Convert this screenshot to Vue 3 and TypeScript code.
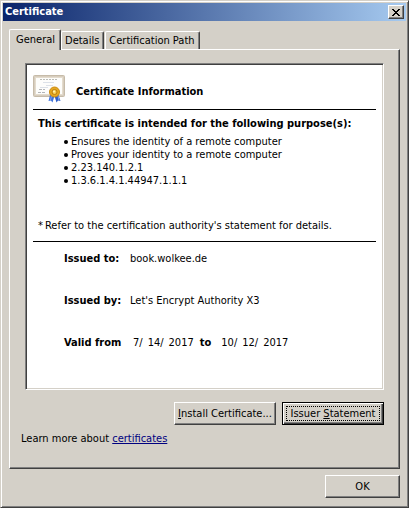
<script setup lang="ts">
import { ref } from 'vue'

const tabs: string[] = ['General', 'Details', 'Certification Path']
const activeTab = ref<string>('General')

const purposes: string[] = [
  'Ensures the identity of a remote computer',
  'Proves your identity to a remote computer',
  '2.23.140.1.2.1',
  '1.3.6.1.4.1.44947.1.1.1',
]

const certificate = {
  issuedTo: 'book.wolkee.de',
  issuedBy: "Let's Encrypt Authority X3",
  validFrom: ['7/', '14/', '2017'],
  validTo: ['10/', '12/', '2017'],
}
</script>

<template>
  <main class="dialog">
    <header class="titlebar">
      <h1>Certificate</h1>
      <button class="close" type="button" aria-label="Close">
        <svg width="8" height="7" viewBox="0 0 8 7" shape-rendering="crispEdges" aria-hidden="true">
          <path d="M0 0h2v1h1v1h2V1h1V0h2v1H7v1H6v1H5v1h1v1h1v1h1v1H6V6H5V5H3v1H2v1H0V6h1V5h1V4h1V3H2V2H1V1H0z" />
        </svg>
      </button>
    </header>

    <nav class="tabs" role="tablist">
      <button
        v-for="tab in tabs"
        :key="tab"
        type="button"
        role="tab"
        class="tab"
        :class="{ active: tab === activeTab }"
        :aria-selected="tab === activeTab"
        @click="activeTab = tab"
      >{{ tab }}</button>
    </nav>

    <section class="panel" role="tabpanel">
      <article class="sheet">
        <div class="heading">
          <svg class="badge" width="34" height="30" viewBox="0 0 34 30" aria-hidden="true">
            <rect x="0.5" y="1.5" width="31" height="21" rx="1" fill="#e4dccd" stroke="#c6bba8" />
            <rect x="1.5" y="2.5" width="29" height="19" fill="none" stroke="#cabfae" stroke-dasharray="1 1" />
            <rect x="3" y="4" width="26" height="16" fill="#fdfdfb" />
            <path d="M7 5.500h18" stroke="#bcbcb6" stroke-dasharray="2 1" />
            <path d="M10 8.500h11M13 11.500h7M7 13.500h8" stroke="#dce1e8" />
            <path d="M6 15.500h6M5 18.500h8" stroke="#b3b5b8" stroke-dasharray="3 1" />
            <path d="M17 21l-1.500 6 2.500-.5 1.500 2 2-6.500z" fill="#3f73dc" />
            <path d="M25.500 21l2 6-2.500-.5-1.500 2-2-6.500z" fill="#2f5fc9" />
            <path d="M18.500 22l-1 4M25 22l1 4" stroke="#7ba6f2" />
            <circle cx="21.500" cy="18" r="5" fill="#e5a81f" stroke="#cd8b10" />
            <circle cx="21.500" cy="18" r="2.500" fill="#f7cf55" stroke="#b97d12" />
            <circle cx="21" cy="17.500" r="1" fill="#fff3b8" />
          </svg>
          <h2>Certificate Information</h2>
        </div>
        <hr />
        <h3>This certificate is intended for the following purpose(s):</h3>
        <ul class="purposes">
          <li v-for="purpose in purposes" :key="purpose">{{ purpose }}</li>
        </ul>
        <p class="note"><span>*</span>Refer to the certification authority's statement for details.</p>
        <hr />
        <dl class="facts">
          <div class="fact">
            <dt>Issued to:</dt>
            <dd>{{ certificate.issuedTo }}</dd>
          </div>
          <div class="fact">
            <dt>Issued by:</dt>
            <dd>{{ certificate.issuedBy }}</dd>
          </div>
          <div class="fact">
            <dt>Valid from</dt>
            <dd class="dates">
              <span class="date"><span v-for="part in certificate.validFrom" :key="part">{{ part }}</span></span>
              <b>to</b>
              <span class="date"><span v-for="part in certificate.validTo" :key="part">{{ part }}</span></span>
            </dd>
          </div>
        </dl>
      </article>

      <div class="actions">
        <button class="button" type="button"><span><u>I</u>nstall Certificate...</span></button>
        <button class="button default" type="button"><span>Issuer <u>S</u>tatement</span></button>
      </div>
      <p class="learn">Learn more about <a href="#certificates">certificates</a></p>
    </section>

    <footer class="footer">
      <button class="button ok" type="button"><span>OK</span></button>
    </footer>
  </main>
</template>

<style>
body {
  background: #d4d0c8;
}
</style>

<style scoped>
.dialog,
.dialog * {
  box-sizing: border-box;
}

.dialog {
  display: flex;
  flex-direction: column;
  min-height: 100vh;
  padding: 1px;
  border: 1px solid;
  border-color: #d4d0c8 #404040 #404040 #d4d0c8;
  box-shadow: inset 1px 1px #fff, inset -1px -1px #808080;
  background: #d4d0c8;
  color: #000;
  font: 11px/16px "DejaVu Sans Condensed", "DejaVu Sans", sans-serif;
}

h1,
h2,
h3,
p,
ul,
dl,
dd {
  margin: 0;
  padding: 0;
}

h1,
h2,
h3,
dt,
b {
  font-size: 11px;
  font-weight: bold;
}

button {
  font: inherit;
  color: inherit;
  background: #d4d0c8;
  padding: 0;
  border-radius: 0;
  white-space: nowrap;
}

.titlebar {
  display: flex;
  align-items: center;
  justify-content: space-between;
  height: 18px;
  margin: 1px;
  padding: 0 2px;
  background: linear-gradient(90deg, #0a246a, #a6caf0);
  color: #fff;
}

.close {
  display: flex;
  align-items: center;
  justify-content: center;
  width: 16px;
  height: 14px;
  border: 1px solid;
  border-color: #fff #404040 #404040 #fff;
  box-shadow: inset -1px -1px #808080;
}

.tabs {
  display: flex;
  align-items: flex-end;
  height: 20px;
  margin: 7px 7px 0;
}

.tab {
  height: 18px;
  margin-right: 1px;
  padding: 0 4px 0 3px;
  border: solid;
  border-width: 1px 1px 0;
  border-color: #fff #404040 #fff #fff;
  border-radius: 2px 2px 0 0;
  box-shadow: inset -1px 0 #808080;
}

.tab.active {
  z-index: 1;
  height: 21px;
  margin: 0 0 -1px;
  padding: 0 5px 1px 6px;
}

.panel {
  display: flex;
  flex: 1;
  flex-direction: column;
  margin: 0 7px;
  padding: 13px 15px 21px;
  border: 1px solid;
  border-color: #fff #404040 #404040 #fff;
  box-shadow: inset -1px -1px #808080;
}

.sheet {
  flex: 1;
  padding: 10px 7px 36px;
  border: 1px solid;
  border-color: #808080 #fff #fff #808080;
  box-shadow: inset 1px 1px #404040, inset -1px -1px #d4d0c8;
  background: #fff;
}

.heading {
  display: flex;
  align-items: flex-start;
  gap: 9px;
  height: 35px;
}

.badge {
  flex: none;
}

h2 {
  margin-top: 10px;
}

hr {
  height: 1px;
  margin: 0;
  border: 0;
  background: #000;
}

h3 {
  margin: 6px 0 0 5px;
}

.purposes {
  margin: 3px 0 0 31px;
  list-style: none;
  line-height: 13px;
}

.purposes li {
  display: flex;
  align-items: center;
  gap: 3px;
}

.purposes li::before {
  content: "";
  width: 4px;
  height: 4px;
  border-radius: 50%;
  background: #000;
}

.note {
  display: flex;
  gap: 2px;
  margin: 31px 0 7px 5px;
}

.facts {
  display: grid;
  gap: 26px;
  margin: 9px 0 0 31px;
}

.fact {
  display: flex;
}

dt {
  width: 66px;
}

.dates {
  display: flex;
  gap: 6px;
  padding-left: 3px;
}

.dates b {
  margin-right: 4px;
}

.date {
  display: flex;
  gap: 5px;
}

.actions {
  display: flex;
  justify-content: flex-end;
  gap: 6px;
  margin-top: 12px;
}

.button {
  width: 102px;
  height: 23px;
  border: 1px solid;
  border-color: #fff #404040 #404040 #fff;
  box-shadow: inset -1px -1px #808080;
}

.button.default {
  padding: 3px;
  border-color: #000;
  box-shadow: inset 1px 1px #fff, inset -1px -1px #404040, inset -2px -2px #808080;
}

.button.default span {
  display: block;
  border: 1px dotted #000;
  line-height: 13px;
}

.learn {
  margin: 6px 0 0 -4px;
}

a {
  color: #000080;
}

.footer {
  display: flex;
  justify-content: flex-end;
  padding: 6px 7px 8px;
}

.ok {
  width: 75px;
}
</style>
